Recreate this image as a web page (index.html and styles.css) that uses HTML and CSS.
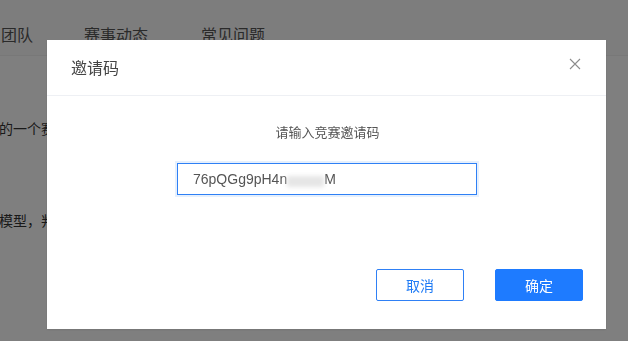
FILE: index.html
```html
<!DOCTYPE html>
<html lang="zh">
<head>
<meta charset="utf-8">
<link rel="stylesheet" href="styles.css">
</head>
<body>
<div class="page">
  <nav class="nav">
    <span class="nav-item first">团队</span>
    <span class="nav-item second">赛事动态</span>
    <span class="nav-item third">常见问题</span>
  </nav>
  <div class="content">
    <p class="line l1">的一个赛事，旨在推动</p>
    <p class="line l2">模型，判断图片中的</p>
  </div>
</div>
<div class="overlay">
  <div class="modal">
    <div class="modal-header">
      <span class="modal-title">邀请码</span>
      <svg class="close" width="12" height="12" viewBox="0 0 12 12"><path d="M1 1L11 11M11 1L1 11" stroke="#8c8c8c" stroke-width="1.1" fill="none"/></svg>
    </div>
    <div class="modal-body">
      <div class="prompt">请输入竞赛邀请码</div>
      <div class="input"><span>76pQGg9pH4n</span><span class="mask"></span><span>M</span></div>
    </div>
    <div class="modal-footer">
      <button class="btn btn-default">取消</button>
      <button class="btn btn-primary">确定</button>
    </div>
  </div>
</div>
</body>
</html>
```
FILE: styles.css
```css
html, body {
  margin: 0;
  padding: 0;
  width: 628px;
  height: 341px;
  overflow: hidden;
  font-family: "Noto Sans CJK SC", "Liberation Sans", sans-serif;
  background: #ffffff;
}
.page {
  width: 628px;
  height: 341px;
}
.nav {
  height: 56px;
  box-sizing: border-box;
  display: flex;
  align-items: center;
  padding-left: 1px;
  padding-top: 12px;
  border-bottom: 1px solid #f0f0f0;
  font-size: 16px;
  color: #555;
  background: #fbfbfb;
}
.second {
  margin-left: 51px;
}
.third {
  margin-left: 53px;
}
.content {
  font-size: 14px;
  color: #333;
  background: #ffffff;
}
.line {
  margin: 0;
  white-space: nowrap;
  position: relative;
  left: -1px;
}
.l1 {
  padding-top: 62px;
}
.l2 {
  padding-top: 72px;
}
.overlay {
  position: fixed;
  inset: 0;
  background: rgba(0, 0, 0, 0.5);
}
.modal {
  margin-left: 47px;
  margin-top: 40px;
  width: 559px;
  height: 289px;
  background: #fff;
  display: flex;
  flex-direction: column;
  box-shadow: 0 1px 2px rgba(0,0,0,0.1);
}
.modal-header {
  height: 56px;
  box-sizing: border-box;
  border-bottom: 1px solid #eef0f4;
  display: flex;
  align-items: center;
  justify-content: space-between;
  padding: 0 25px 0 24px;
}
.modal-title {
  font-size: 16px;
  color: #444;
  position: relative;
  top: -1px;
}
.close {
  display: block;
  position: relative;
  top: -4px;
}
.modal-body {
  display: flex;
  flex-direction: column;
  align-items: center;
  padding-top: 27px;
  height: 145px;
  box-sizing: border-box;
}
.prompt {
  font-size: 13px;
  color: #555;
  line-height: 18px;
  margin-left: 2px;
}
.input {
  margin-top: 22px;
  margin-left: 1px;
  width: 300px;
  height: 32px;
  box-sizing: border-box;
  border: 1px solid #2f80f5;
  box-shadow: 0 0 0 2px #e6f0fd;
  display: flex;
  align-items: center;
  padding-left: 15px;
  font-family: "Liberation Sans", Arial, sans-serif;
  font-size: 14px;
  color: #555;
}
.mask {
  background: #e6e6e6;
  filter: blur(2px);
  height: 11px;
  margin-top: 5px;
  width: 37px;
  display: inline-block;
}
.modal-footer {
  display: flex;
  justify-content: flex-end;
  gap: 31px;
  padding: 28px 23px 0 0;
}
.btn {
  width: 88px;
  height: 32px;
  box-sizing: border-box;
  border-radius: 2px;
  font-family: "Noto Sans CJK SC", sans-serif;
  font-size: 14px;
  padding: 0;
  cursor: pointer;
}
.btn-default {
  background: #fff;
  border: 1px solid #2f80f5;
  color: #1f7bf5;
}
.btn-primary {
  background: #1e7bff;
  border: 1px solid #1e7bff;
  color: #fff;
}
```
